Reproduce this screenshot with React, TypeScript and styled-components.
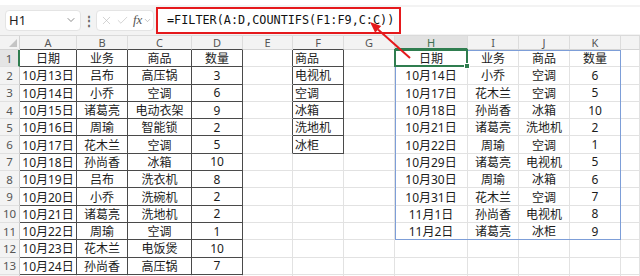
import React from 'react';
import styled, {createGlobalStyle} from 'styled-components';
import {ChevronDown, X, Check} from 'lucide-react';

const GlobalStyle = createGlobalStyle`
  html, body {
    margin: 0;
    padding: 0;
    background: #fff;
    overflow: hidden;
  }
  body {
    font-family: "Noto Sans", "Noto Sans CJK SC", sans-serif;
  }
`;

const Page = styled.div`
  position: relative;
  width: 640px;
  height: 276px;
  overflow: hidden;
  display: flex;
  flex-direction: column;
`;

const TopStrip = styled.div`
  flex: none;
  height: 5px;
  background: #fff;
`;

const FormulaBar = styled.div`
  flex: none;
  height: 31px;
  box-sizing: border-box;
  display: flex;
  align-items: center;
  padding-left: 5px;
  background: #f3f3f3;
  border-bottom: 1px solid #dadada;
`;

const Box = styled.div<{$w: number}>`
  width: ${(p) => p.$w}px;
  height: 21px;
  box-sizing: border-box;
  display: flex;
  align-items: center;
  background: #fff;
  border: 1px solid #e4e4e4;
  border-radius: 4px;
  color: #333;
`;

const NameText = styled.span`
  flex: 1;
  padding-left: 3px;
  font-size: 13px;
  color: #222;
`;

const Dots = styled.span`
  width: 15px;
  text-align: center;
  font-size: 12px;
  font-weight: 700;
  color: #666;
`;

const Fx = styled.span`
  margin-left: 4px;
  font-family: "Liberation Serif", serif;
  font-style: italic;
  font-size: 13px;
  color: #555;
`;

const FormulaField = styled.div`
  flex: 1;
  height: 27px;
  margin-left: 2px;
  display: flex;
  background: #fff;
`;

const Highlight = styled.div`
  width: 245px;
  box-sizing: border-box;
  border: 2px solid #e5191c;
  display: flex;
  align-items: center;
  padding-left: 9px;
  font-family: "DejaVu Sans Mono", monospace;
  font-size: 11.8px;
  color: #111;
  white-space: nowrap;
`;

const Sheet = styled.div`
  flex: 1;
  display: grid;
  grid-template-columns: 20px 57px 51px 64px 51px 50px 51px 51px 73px 51px 51px 51px 1fr;
  grid-template-rows: 14px repeat(14, 17.3px);
  overflow: hidden;
`;

const Corner = styled.div`
  grid-row: 1;
  grid-column: 1;
  position: relative;
  background: #f3f3f3;
  border-right: 1px solid #d4d4d4;
  border-bottom: 1px solid #d4d4d4;
  box-sizing: border-box;
`;

const ColHead = styled.div<{$c: number; $active?: boolean; $bottom: string}>`
  grid-row: 1;
  grid-column: ${(p) => p.$c};
  box-sizing: border-box;
  display: flex;
  align-items: center;
  justify-content: center;
  background: ${(p) => (p.$active ? '#e2e2e2' : '#f3f3f3')};
  border-right: 1px solid #dcdcdc;
  border-bottom: ${(p) => (p.$active ? '2px solid #2f7d4f' : `1px solid ${p.$bottom}`)};
  font-size: 11px;
  color: ${(p) => (p.$active ? '#3d6f50' : '#555')};
`;

const RowHead = styled.div<{$r: number; $active?: boolean}>`
  grid-row: ${(p) => p.$r};
  grid-column: 1;
  box-sizing: border-box;
  display: flex;
  align-items: center;
  justify-content: center;
  background: ${(p) => (p.$active ? '#e4e4e4' : '#f3f3f3')};
  border-right: ${(p) => (p.$active ? '2px solid #2f7d4f' : '1px solid #c9c9c9')};
  border-bottom: 1px solid #e0e0e0;
  font-size: 11.5px;
  color: #555;
`;

const Cell = styled.div<{$r: number; $c: number; $left?: boolean; $right: string; $bottom: string}>`
  grid-row: ${(p) => p.$r};
  grid-column: ${(p) => p.$c};
  box-sizing: border-box;
  display: flex;
  align-items: center;
  justify-content: ${(p) => (p.$left ? 'flex-start' : 'center')};
  padding: 0 2px;
  border-right: 1px solid ${(p) => p.$right};
  border-bottom: 1px solid ${(p) => p.$bottom};
  font-size: 12px;
  color: #1c1c1c;
  white-space: nowrap;
  overflow: hidden;
`;

const Spill = styled.div`
  grid-row: 2 / 13;
  grid-column: 9 / 13;
  border: 1px solid #7d9ed8;
  z-index: 1;
  pointer-events: none;
`;

const Selection = styled.div`
  grid-row: 2;
  grid-column: 9;
  position: relative;
  margin: -1px 0 0 -1px;
  border: 2px solid #2f7d4f;
  z-index: 2;
  pointer-events: none;
`;

const Handle = styled.div`
  position: absolute;
  right: -4px;
  bottom: -4px;
  width: 4px;
  height: 4px;
  background: #2f7d4f;
  border: 1px solid #fff;
`;

const Arrow = styled.svg`
  position: absolute;
  left: 0;
  top: 0;
  pointer-events: none;
  z-index: 5;
`;

const COLS = ['A', 'B', 'C', 'D', 'E', 'F', 'G', 'H', 'I', 'J', 'K', ''];

const sales = [
  ['日期', '业务', '商品', '数量'],
  ['10月13日', '吕布', '高压锅', '3'],
  ['10月14日', '小乔', '空调', '6'],
  ['10月15日', '诸葛亮', '电动衣架', '9'],
  ['10月16日', '周瑜', '智能锁', '2'],
  ['10月17日', '花木兰', '空调', '5'],
  ['10月18日', '孙尚香', '冰箱', '10'],
  ['10月19日', '吕布', '洗衣机', '8'],
  ['10月20日', '小乔', '洗碗机', '2'],
  ['10月21日', '诸葛亮', '洗地机', '2'],
  ['10月22日', '周瑜', '空调', '1'],
  ['10月23日', '花木兰', '电饭煲', '10'],
  ['10月24日', '孙尚香', '高压锅', '7'],
];

const goods = ['商品', '电视机', '空调', '冰箱', '洗地机', '冰柜'];

const result = [
  ['日期', '业务', '商品', '数量'],
  ['10月14日', '小乔', '空调', '6'],
  ['10月17日', '花木兰', '空调', '5'],
  ['10月18日', '孙尚香', '冰箱', '10'],
  ['10月21日', '诸葛亮', '洗地机', '2'],
  ['10月22日', '周瑜', '空调', '1'],
  ['10月29日', '诸葛亮', '电视机', '5'],
  ['10月30日', '周瑜', '冰箱', '6'],
  ['10月31日', '花木兰', '空调', '7'],
  ['11月1日', '孙尚香', '电视机', '8'],
  ['11月2日', '诸葛亮', '冰柜', '9'],
];

const DARK = '#4a4a4a';
const GRID = '#e2e2e2';

// ci: 0 = A ... 11 = L
const isDark = (r: number, ci: number) =>
  (r >= 1 && r <= 13 && ci >= 0 && ci <= 3) || (r >= 1 && r <= 6 && ci === 5);

const valueAt = (r: number, ci: number) => {
  if (ci <= 3) return sales[r - 1]?.[ci] ?? '';
  if (ci === 5) return goods[r - 1] ?? '';
  if (ci >= 7 && ci <= 10) return result[r - 1]?.[ci - 7] ?? '';
  return '';
};

export default function App() {
  const rows = Array.from({length: 14}, (_, i) => i + 1);
  return (
    <Page>
      <GlobalStyle />
      <TopStrip />
      <FormulaBar>
        <Box $w={76}>
          <NameText>H1</NameText>
          <ChevronDown size={12} strokeWidth={1.5} color="#666" style={{marginRight: 3}} />
        </Box>
        <Dots>⋮</Dots>
        <Box $w={58}>
          <X size={13} strokeWidth={1.2} color="#bdbdbd" style={{marginLeft: 3}} />
          <Check size={13} strokeWidth={1.2} color="#bdbdbd" style={{marginLeft: 3}} />
          <Fx>fx</Fx>
          <ChevronDown size={9} strokeWidth={1.5} color="#999" style={{marginLeft: 1}} />
        </Box>
        <FormulaField>
          <Highlight>=FILTER(A:D,COUNTIFS(F1:F9,C:C))</Highlight>
        </FormulaField>
      </FormulaBar>
      <Sheet>
        <Corner>
          <svg width="20" height="14" style={{position: 'absolute', left: 0, top: 0}}>
            <polygon points="17,3 17,11 9,11" fill="#c4c4c4" />
          </svg>
        </Corner>
        {COLS.map((name, ci) => (
          <ColHead key={ci} $c={ci + 2} $active={name === 'H'} $bottom={isDark(1, ci) ? DARK : '#d4d4d4'}>
            {name}
          </ColHead>
        ))}
        {rows.map((r) => (
          <React.Fragment key={r}>
            {/* row 14 only peeks in at the bottom edge, so no label */}
            <RowHead $r={r + 1} $active={r === 1}>
              {r <= 13 ? r : ''}
            </RowHead>
            {COLS.map((_, ci) => (
              <Cell
                key={ci}
                $r={r + 1}
                $c={ci + 2}
                $left={ci === 5}
                $right={isDark(r, ci) || isDark(r, ci + 1) ? DARK : GRID}
                $bottom={isDark(r, ci) || isDark(r + 1, ci) ? DARK : GRID}
              >
                {valueAt(r, ci)}
              </Cell>
            ))}
          </React.Fragment>
        ))}
        <Spill />
        <Selection>
          <Handle />
        </Selection>
      </Sheet>
      <Arrow width="640" height="276" viewBox="0 0 640 276">
        <line x1="410" y1="58" x2="378" y2="29.5" stroke="#e5191c" strokeWidth="2" />
        <polygon points="370,22 381.2,26 375.2,32.7" fill="#e5191c" />
      </Arrow>
    </Page>
  );
}
